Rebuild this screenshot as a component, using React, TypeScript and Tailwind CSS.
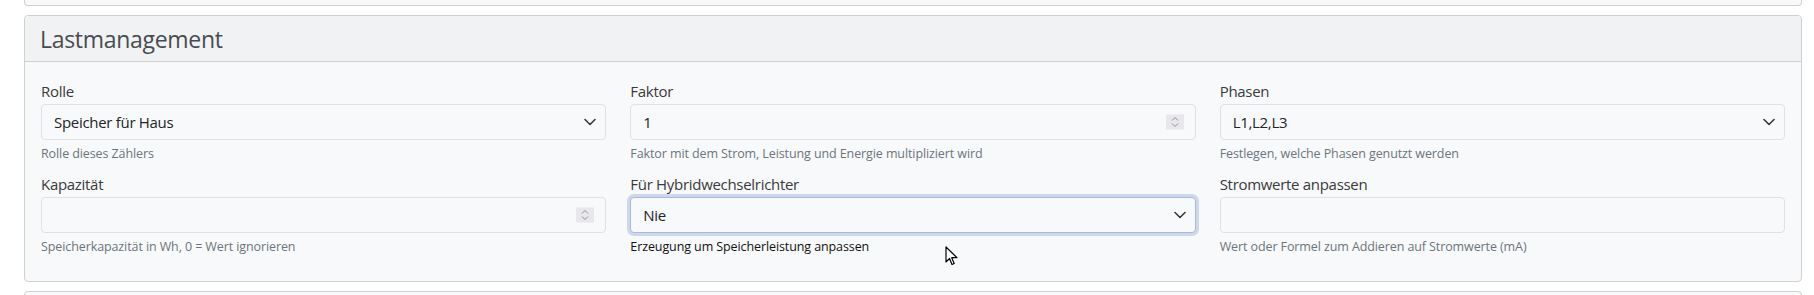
import React from "react";

const Chevron = () => (
  <svg className="pointer-events-none absolute right-[9px] top-1/2 -translate-y-1/2" width="12" height="8" viewBox="0 0 12 8">
    <path d="M1 1.5l5 5 5-5" fill="none" stroke="#343a40" strokeWidth="1.6" strokeLinecap="round" strokeLinejoin="round" />
  </svg>
);

const Spinner = () => (
  <div className="pointer-events-none absolute right-[11px] top-1/2 -translate-y-1/2 w-[18px] h-[15px] bg-[#e8e8ec] flex flex-col items-center justify-center gap-[1px]">
    <svg width="8" height="5" viewBox="0 0 8 5">
      <path d="M1 4l3-3 3 3" fill="none" stroke="#8a8f98" strokeWidth="1" />
    </svg>
    <svg width="8" height="5" viewBox="0 0 8 5">
      <path d="M1 1l3 3 3-3" fill="none" stroke="#8a8f98" strokeWidth="1" />
    </svg>
  </div>
);

type FieldProps = {
  label: string;
  help: string;
  value?: string;
  kind: "select" | "number" | "text";
  focused?: boolean;
  darkHelp?: boolean;
};

function Field({ label, help, value = "", kind, focused, darkHelp }: FieldProps) {
  return (
    <div className="flex flex-col">
      <label className="text-[15px] leading-[22px] text-[#3a3a3a] mb-[2px] tracking-[-0.3px]">{label}</label>
      <div
        className={
          "relative h-[36px] rounded-[4px] border bg-[#f8f9fa] flex items-center px-[12px] " +
          (focused ? "border-[#a9b9d9] shadow-[0_0_0_3px_#cfd8eb]" : "border-[#dee2e6]")
        }
      >
        <span className="text-[15px] text-[#212529] tracking-[-0.3px]">{value}</span>
        {kind === "select" && <Chevron />}
        {kind === "number" && <Spinner />}
      </div>
      <div className={"mt-[5px] text-[12.5px] leading-[18px] tracking-[-0.1px] " + (darkHelp ? "text-[#111]" : "text-[#6c757d]")}>
        {help}
      </div>
    </div>
  );
}

export default function App() {
  return (
    <div className="relative bg-white w-[1814px] h-[295px] overflow-hidden" style={{ fontFamily: "'Open Sans', 'Noto Sans', sans-serif" }}>
      <div className="ml-[24px] mr-[12px] h-[7px] -mt-[1px] border border-t-0 border-[#d0d0d0] rounded-b-[4px] bg-[#f8f9fa]" />

      <div className="ml-[24px] mr-[12px] mt-[9px] border border-[#d0d0d0] rounded-[4px] bg-[#f8f9fa]">
        <div className="bg-[#f1f2f4] border-b border-[#d0d0d0] rounded-t-[4px] pl-[15px] pt-[8px] pb-[7px]">
          <h2 className="text-[23px] leading-[30px] text-[#474c52] tracking-[-0.3px]">Lastmanagement</h2>
        </div>
        <div className="px-[16px] pt-[18px] pb-[25px] grid grid-cols-3 gap-x-[24px] gap-y-[10px]">
          <Field label="Rolle" kind="select" value="Speicher für Haus" help="Rolle dieses Zählers" />
          <Field label="Faktor" kind="number" value="1" help="Faktor mit dem Strom, Leistung und Energie multipliziert wird" />
          <Field label="Phasen" kind="select" value="L1,L2,L3" help="Festlegen, welche Phasen genutzt werden" />
          <Field label="Kapazität" kind="number" help="Speicherkapazität in Wh, 0 = Wert ignorieren" />
          <Field label="Für Hybridwechselrichter" kind="select" value="Nie" focused darkHelp help="Erzeugung um Speicherleistung anpassen" />
          <Field label="Stromwerte anpassen" kind="text" help="Wert oder Formel zum Addieren auf Stromwerte (mA)" />
        </div>
      </div>

      <div className="ml-[24px] mr-[12px] mt-[9px] h-[20px] border border-[#d0d0d0] rounded-t-[4px] bg-[#f8f9fa]" />

      <svg className="absolute left-[945px] top-[246px]" width="13" height="20" viewBox="0 0 13 20">
        <path d="M1 1v15l3.5-3.5 2.5 6 2.2-1-2.5-5.8H12z" fill="#fff" stroke="#000" strokeWidth="1.2" strokeLinejoin="round" />
      </svg>
    </div>
  );
}
